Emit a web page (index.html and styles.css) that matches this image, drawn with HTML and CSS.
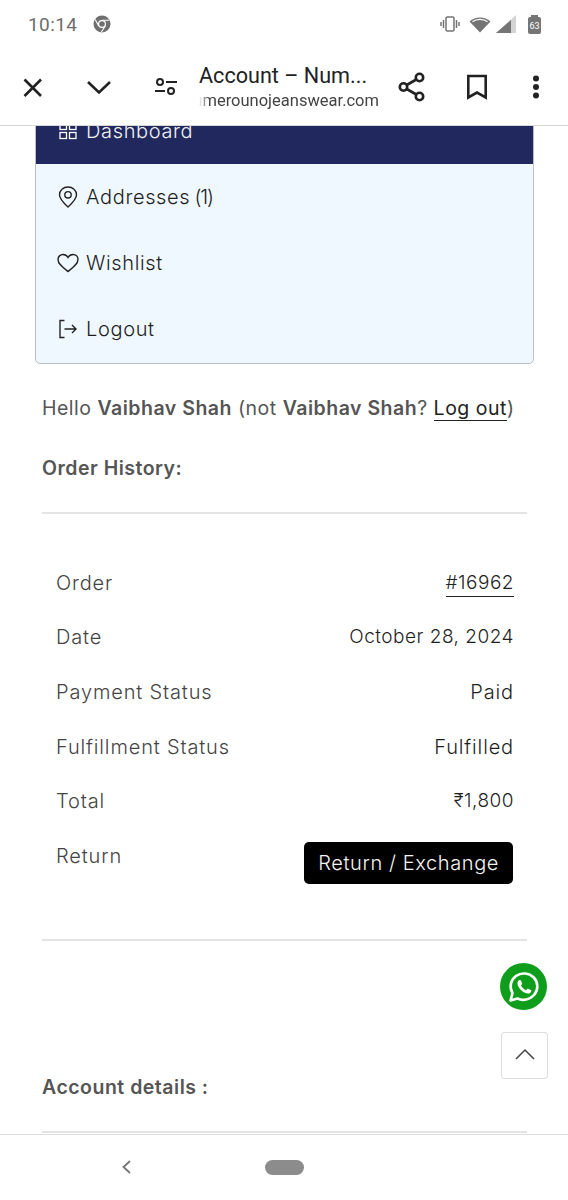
FILE: index.html
```html
<!DOCTYPE html>
<html lang="en">
<head>
  <meta charset="UTF-8" />
  <meta name="viewport" content="width=device-width, initial-scale=1" />
  <title>Account – Numero Uno</title>
  <link rel="stylesheet" href="styles.css">
</head>
<body>

<div class="phone">
  <div class="statusbar">
    <div class="status-left">
      <span class="time">10:14</span>
      <svg class="chrome" width="18" height="18" viewBox="0 0 18 18">
        <circle cx="9" cy="9" r="8.5" fill="#6f6f6f"/>
        <circle cx="9" cy="9" r="3.4" fill="#6f6f6f" stroke="#fff" stroke-width="1.2"/>
        <path d="M9 5.2h7.4M5.7 10.9 2.2 4.6M12.3 10.9 8.4 17" stroke="#fff" stroke-width="1.1" fill="none"/>
      </svg>
    </div>
    <div class="status-right">
      <svg class="st-vibrate" width="20" height="16" viewBox="0 0 20 16" fill="none" stroke="#757575" stroke-width="1.5">
        <rect x="6" y="1" width="8" height="14" rx="1.2"/>
        <path d="M3.5 4v8M1 6v4M16.500 4v8M19 6v4"/>
      </svg>
      <svg class="st-wifi" width="22" height="17" viewBox="0 0 22 17">
        <path d="M11 16.500 0.500 5.500C6.500 0 15.500 0 21.500 5.500Z" fill="#757575"/>
        <path d="M3.500 5.800C7.500 2.600 14.500 2.600 18.500 5.800" stroke="#fff" stroke-width="1.200" fill="none"/>
      </svg>
      <svg class="st-signal" width="20" height="18" viewBox="0 0 20 18">
        <path d="M20 0V18H0Z" fill="#d4d4d4"/>
        <path d="M15 5V18H0Z" fill="#757575"/>
      </svg>
      <div class="battery"><span>63</span></div>
    </div>
  </div>

  <div class="toolbar">
    <svg class="tool-icon" width="24" height="24" viewBox="0 0 24 24" fill="none" stroke="#222" stroke-width="2.600">
      <path d="M4.500 4.500 21 21M21 4.500 4.500 21"/>
    </svg>
    <svg class="tool-icon chev" width="28" height="24" viewBox="0 0 28 24" fill="none" stroke="#222" stroke-width="2.600">
      <path d="M3 7 14 17.500 25 7"/>
    </svg>
    <svg class="tool-icon tune" width="24" height="24" viewBox="0 0 24 24" fill="none" stroke="#222" stroke-width="2">
      <circle cx="6" cy="7" r="3"/>
      <circle cx="17" cy="16" r="3"/>
      <path d="M12 7H23M1 16H11"/>
    </svg>
    <div class="tab-title">
      <div class="tab-name">Account – Num...</div>
      <div class="tab-url"><span>numerounojeanswear.com</span></div>
    </div>
    <svg class="tool-icon share" width="28" height="30" viewBox="0 0 28 30" fill="none" stroke="#222" stroke-width="2.600">
      <circle cx="21.500" cy="5.500" r="3.700"/>
      <circle cx="5.500" cy="15" r="3.700"/>
      <circle cx="21.500" cy="24.500" r="3.700"/>
      <path d="M8.700 13 18.300 7.500M8.700 17 18.300 22.500"/>
    </svg>
    <svg class="tool-icon mark" width="22" height="26" viewBox="0 0 22 26" fill="none" stroke="#222" stroke-width="2.600">
      <path d="M2.300 2H19.700V23.500L11 18.500 2.300 23.500Z"/>
    </svg>
    <svg class="tool-icon dots" width="8" height="24" viewBox="0 0 8 24" fill="#222">
      <circle cx="4" cy="3.500" r="3"/>
      <circle cx="4" cy="12" r="3"/>
      <circle cx="4" cy="20.500" r="3"/>
    </svg>
  </div>

  <div class="content">
    <ul class="account-nav">
      <li class="nav-item active">
        <svg width="20" height="20" viewBox="0 0 20 20" fill="none" stroke="#fff" stroke-width="1.300">
          <rect x="2" y="2.500" width="6.500" height="6"/><rect x="11.500" y="2.500" width="6.500" height="6"/>
          <rect x="2" y="11.500" width="6.500" height="6"/><rect x="11.500" y="11.500" width="6.500" height="6"/>
        </svg>
        Dashboard
      </li>
      <li class="nav-item">
        <svg width="20" height="22" viewBox="0 0 20 22" fill="none" stroke="#222" stroke-width="1.400">
          <path d="M10 21C5 16.500 1.500 13 1.500 8.800 1.500 4.300 5.300 1 10 1S18.500 4.300 18.500 8.800C18.500 13 15 16.500 10 21Z"/>
          <circle cx="10" cy="8.800" r="3.200"/>
        </svg>
        <span>Addresses <span class="count">(1)</span></span>
      </li>
      <li class="nav-item">
        <svg class="icon-heart" width="22" height="20" viewBox="0 0 22 20" fill="none" stroke="#222" stroke-width="1.400">
          <path d="M11 18.500C6 14.500 1 11 1 6.500 1 3.500 3.300 1.500 6 1.500 8 1.500 10 2.500 11 4.500 12 2.500 14 1.500 16 1.500 18.700 1.500 21 3.500 21 6.500 21 11 16 14.500 11 18.500Z"/>
        </svg>
        Wishlist
      </li>
      <li class="nav-item">
        <svg width="20" height="20" viewBox="0 0 20 20" fill="none" stroke="#222" stroke-width="1.400">
          <path d="M6.500 1.500H2V18.500H6.500M6.500 10H18M14 6l4 4-4 4"/>
        </svg>
        Logout
      </li>
    </ul>

    <div class="main">
      <p class="hello">Hello <strong>Vaibhav Shah</strong> (not <strong>Vaibhav Shah</strong>? <a href="#">Log out</a>)</p>
      <h3 class="heading">Order History:</h3>
      <hr class="rule">
      <dl class="order">
        <div class="order-row"><dt>Order</dt><dd class="num"><a href="#">#16962</a></dd></div>
        <div class="order-row"><dt>Date</dt><dd class="num">October 28, 2024</dd></div>
        <div class="order-row"><dt>Payment Status</dt><dd>Paid</dd></div>
        <div class="order-row"><dt>Fulfillment Status</dt><dd>Fulfilled</dd></div>
        <div class="order-row"><dt>Total</dt><dd class="num">₹1,800</dd></div>
        <div class="order-row"><dt>Return</dt><dd><button class="btn-return">Return / Exchange</button></dd></div>
      </dl>
      <hr class="rule rule-end">
      <h3 class="heading heading-account">Account details :</h3>
      <hr class="rule">
    </div>

    <div class="whatsapp">
      <svg width="34" height="34" viewBox="0 0 34 34" fill="none">
        <path d="M3.500 30.500 5.500 23.200C2 17 3.500 10 9 6 14.500 2 22 2.800 26.800 7.500 31.500 12.500 31.500 20 27 25 22.500 30 15.500 31 10.500 28.500Z" stroke="#fff" stroke-width="2.600" stroke-linejoin="round"/>
        <path d="M12.800 10C12 10 10.500 11 10.500 13.500 10.500 16 12.500 18.800 14.800 20.800 17.200 22.800 20 24 22 23.500 23.700 23 24.500 21.500 24.300 20.300L20.800 18.500 19.200 20.300C17 19.500 15 17.500 14 15.500L15.300 13.800 13.800 10.200Z" fill="#fff"/>
      </svg>
    </div>
    <button class="to-top">
      <svg width="20" height="12" viewBox="0 0 20 12" fill="none" stroke="#444" stroke-width="1.500">
        <path d="M1 11 10 2 19 11"/>
      </svg>
    </button>
  </div>

  <div class="navbar">
    <svg class="nav-back" width="12" height="16" viewBox="0 0 12 16" fill="none" stroke="#757575" stroke-width="1.800">
      <path d="M10 2 3.500 8 10 14"/>
    </svg>
    <div class="nav-home"></div>
  </div>
</div>

</body>
</html>
```

FILE: styles.css
```css
* { box-sizing: border-box; }
body {
  margin: 0;
  font-family: 'Inter', sans-serif;
  background: #fff;
  color: #222;
}
.phone {
  display: flex;
  flex-direction: column;
  height: 1200px;
  overflow: hidden;
}
.statusbar {
  height: 48px;
  flex-shrink: 0;
  display: flex;
  justify-content: space-between;
  align-items: center;
  padding: 0 27px 0 28px;
  font-family: 'Roboto', sans-serif;
}
.status-left {
  display: flex;
  align-items: center;
  gap: 16px;
}
.status-right {
  display: flex;
  align-items: center;
}
.st-wifi { margin-left: 9px; }
.st-signal { margin-left: 5px; }
.time {
  font-size: 19px;
  color: #6d6d6d;
  letter-spacing: 0.4px;
}
.battery {
  position: relative;
  width: 13px;
  height: 17px;
  margin-left: 12px;
  margin-top: 2px;
  border-radius: 2px;
  background: #757575;
  color: #fff;
  font-size: 9px;
  line-height: 19px;
  text-align: center;
}
.battery::before {
  content: "";
  position: absolute;
  top: -2px;
  left: 3px;
  width: 7px;
  height: 2px;
  background: #757575;
}
.toolbar {
  height: 78px;
  flex-shrink: 0;
  display: flex;
  align-items: center;
  border-bottom: 1px solid #d8d8d8;
  padding-left: 20px;
}
.tool-icon { flex-shrink: 0; }
.chev { margin-left: 41px; }
.tune { margin-left: 41px; }
.share { margin-left: 19px; }
.mark { margin-left: 40px; }
.dots { margin-left: 44px; }
.tab-title {
  width: 180px;
  margin-left: 21px;
  font-family: 'Roboto', sans-serif;
  white-space: nowrap;
}
.tab-name {
  font-size: 21.600px;
  line-height: 28px;
  color: #222;
}
.tab-url {
  display: flex;
  justify-content: flex-end;
  overflow: hidden;
  font-size: 16.500px;
  line-height: 22px;
  color: #444;
  -webkit-mask-image: linear-gradient(to right, transparent 0, #000 10px);
  mask-image: linear-gradient(to right, transparent 0, #000 10px);
}
.content {
  position: relative;
  flex: 1;
  overflow: hidden;
}
.account-nav {
  list-style: none;
  margin: -29px 34px 0 35px;
  padding: 0 0 1px;
  background: #f0f8ff;
  border: 1px solid #b9bec4;
  border-radius: 5px;
  overflow: hidden;
}
.nav-item {
  height: 66px;
  display: flex;
  align-items: center;
  gap: 8px;
  padding-left: 22px;
  font-size: 20px;
  font-weight: 300;
  letter-spacing: 0.65px;
  color: #1f1f1f;
}
.nav-item svg { flex-shrink: 0; }
.nav-item .icon-heart { margin: 0 -1px; }
.nav-item .count {
  margin-left: -2px;
  letter-spacing: -1.2px;
}
.nav-item.active {
  background: #20285e;
  color: #f0f0f0;
}
.main {
  padding: 0 41px 0 42px;
}
.hello {
  margin: 31px 0 0;
  font-size: 19.500px;
  line-height: 26px;
  letter-spacing: 0.5px;
  color: #555;
  white-space: nowrap;
}
.hello strong { font-weight: 600; }
.hello a {
  color: #222;
  text-decoration: none;
  border-bottom: 1px solid #222;
}
.heading {
  margin: 34px 0 0;
  font-size: 19.500px;
  line-height: 26px;
  font-weight: 600;
  letter-spacing: 0.5px;
  color: #555;
}
.heading-account { margin-top: 133px; }
.rule {
  margin: 31px 0 0;
  border: none;
  border-top: 2px solid #e4e4e4;
}
.rule-end { margin-top: 0; }
.order {
  margin: 0;
  padding: 41.500px 13px 0 14px;
  height: 425px;
}
.order-row {
  display: flex;
  justify-content: space-between;
  align-items: flex-start;
  height: 54.700px;
  font-size: 20px;
  font-weight: 300;
  line-height: 54px;
  letter-spacing: 0.85px;
}
.order-row dt { color: #444; }
.order-row dd {
  margin: 0;
  color: #1f1f1f;
}
.order-row dd.num {
  font-size: 19px;
  letter-spacing: 0.5px;
}
.order-row a {
  color: #222;
  text-decoration: none;
  border-bottom: 1px solid #222;
  padding-bottom: 2px;
}
.btn-return {
  display: block;
  height: 42px;
  margin: 13px 1px 0 0;
  padding: 0 14px;
  border: none;
  border-radius: 5px;
  background: #000;
  color: #f4f4f4;
  font-family: inherit;
  font-size: 20px;
  font-weight: 300;
  letter-spacing: 0.6px;
}
.whatsapp {
  position: absolute;
  top: 837px;
  left: 500px;
  width: 47px;
  height: 47px;
  border-radius: 50%;
  background: #0e9e1c;
  display: flex;
  align-items: center;
  justify-content: center;
}
.to-top {
  position: absolute;
  top: 906px;
  left: 501px;
  width: 47px;
  height: 47px;
  padding: 0;
  background: #fff;
  border: 1px solid #dedede;
  border-radius: 3px;
}
.navbar {
  height: 66px;
  flex-shrink: 0;
  position: relative;
  display: flex;
  align-items: center;
  justify-content: center;
  background: #fff;
  border-top: 1px solid #dcdcdc;
}
.nav-home {
  width: 39px;
  height: 15px;
  border-radius: 8px;
  background: #8c8c8c;
}
.nav-back {
  position: absolute;
  left: 120px;
  top: 24px;
}
```
